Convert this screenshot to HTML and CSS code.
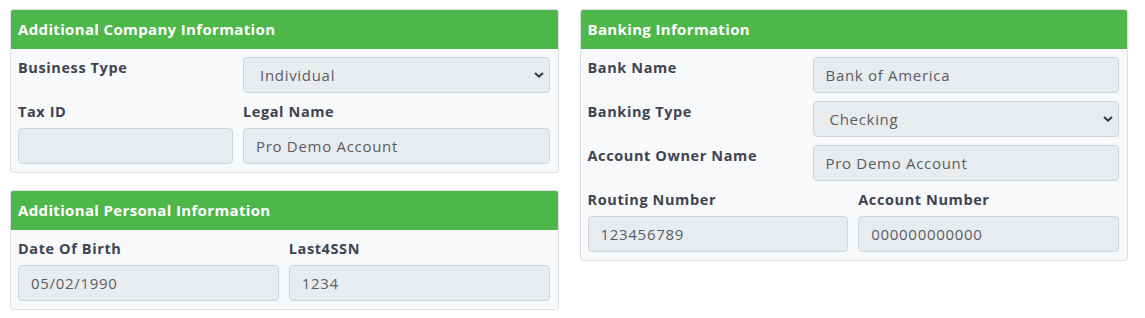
FILE: index.html
```html
<!DOCTYPE html>
<html lang="en">
<head>
    <meta charset="UTF-8">
    <meta name="viewport" content="width=device-width, initial-scale=1.0">
    <title>Account Information</title>
    <link rel="stylesheet" href="styles.css">
</head>
<body>
    <div class="page">
        <div class="column">
            <!-- Company info -->
            <div class="card">
                <div class="card-header">Additional Company Information</div>
                <div class="card-body">
                    <div class="form-row split-5-7">
                        <label>Business Type</label>
                        <div class="select-wrap">
                            <select class="form-control">
                                <option>Individual</option>
                                <option>Company</option>
                            </select>
                            <svg class="chevron" width="10" height="6" viewBox="0 0 10 6"><path d="M1 1 L5 4.6 L9 1" fill="none" stroke="#343a40" stroke-width="2"/></svg>
                        </div>
                    </div>
                    <div class="form-row split-5-7 last">
                        <div>
                            <label>Tax ID</label>
                            <input type="text" class="form-control" value="">
                        </div>
                        <div>
                            <label>Legal Name</label>
                            <input type="text" class="form-control" value="Pro Demo Account">
                        </div>
                    </div>
                </div>
            </div>

            <!-- Personal info -->
            <div class="card">
                <div class="card-header">Additional Personal Information</div>
                <div class="card-body">
                    <div class="form-row split-half last">
                        <div>
                            <label>Date Of Birth</label>
                            <input type="text" class="form-control" value="05/02/1990">
                        </div>
                        <div>
                            <label>Last4SSN</label>
                            <input type="text" class="form-control" value="1234">
                        </div>
                    </div>
                </div>
            </div>
        </div>

        <div class="column">
            <!-- Banking -->
            <div class="card">
                <div class="card-header">Banking Information</div>
                <div class="card-body">
                    <div class="form-row split-5-7">
                        <label>Bank Name</label>
                        <input type="text" class="form-control" value="Bank of America">
                    </div>
                    <div class="form-row split-5-7">
                        <label>Banking Type</label>
                        <div class="select-wrap">
                            <select class="form-control">
                                <option>Checking</option>
                                <option>Savings</option>
                            </select>
                            <svg class="chevron" width="10" height="6" viewBox="0 0 10 6"><path d="M1 1 L5 4.6 L9 1" fill="none" stroke="#343a40" stroke-width="2"/></svg>
                        </div>
                    </div>
                    <div class="form-row split-5-7">
                        <label>Account Owner Name</label>
                        <input type="text" class="form-control" value="Pro Demo Account">
                    </div>
                    <div class="form-row split-half last">
                        <div>
                            <label>Routing Number</label>
                            <input type="text" class="form-control" value="123456789">
                        </div>
                        <div>
                            <label>Account Number</label>
                            <input type="text" class="form-control" value="000000000000">
                        </div>
                    </div>
                </div>
            </div>
        </div>
    </div>
</body>
</html>
```

FILE: styles.css
```css
body {
    font-family: "Open Sans", Arial, sans-serif;
    background-color: #fff;
    color: #3e4451;
    margin: 0;
    padding: 0;
}

.page {
    display: grid;
    grid-template-columns: 1fr 1fr;
    column-gap: 21px;
    padding: 9px 17px 0 10px;
    align-items: start;
}

.column {
    display: flex;
    flex-direction: column;
    gap: 17px;
}

.card {
    background-color: #f8f9fa;
    border: 1px solid #dcdfe3;
    border-radius: 3px;
    overflow: hidden;
}

.card-header {
    background-color: #4db749;
    color: #fff;
    font-weight: 700;
    font-size: 15px;
    height: 39px;
    line-height: 38px;
    padding: 0 7px;
    letter-spacing: 0.35px;
}

.card-body {
    padding: 8px 8px 8px 7px;
}

.form-row {
    display: grid;
    column-gap: 10px;
    margin-bottom: 8px;
}

.form-row.last {
    margin-bottom: 0;
}

.split-5-7 {
    grid-template-columns: 215px 1fr;
}

.split-half {
    grid-template-columns: 1fr 1fr;
}

label {
    display: block;
    font-size: 14.5px;
    font-weight: 700;
    letter-spacing: 0.6px;
    line-height: 21px;
    margin-bottom: 6px;
    color: #3e4451;
}

.form-control {
    display: block;
    width: 100%;
    box-sizing: border-box;
    height: 36px;
    padding: 0 12px;
    font-family: inherit;
    font-size: 15px;
    letter-spacing: 0.7px;
    color: #595d63;
    background-color: #e9ecef;
    border: 1px solid #ced4da;
    border-radius: 4px;
    outline: none;
}

select.form-control {
    appearance: none;
    -webkit-appearance: none;
    padding-left: 16px;
}

.select-wrap {
    position: relative;
}

.chevron {
    position: absolute;
    right: 6px;
    top: 15px;
    pointer-events: none;
}
```
